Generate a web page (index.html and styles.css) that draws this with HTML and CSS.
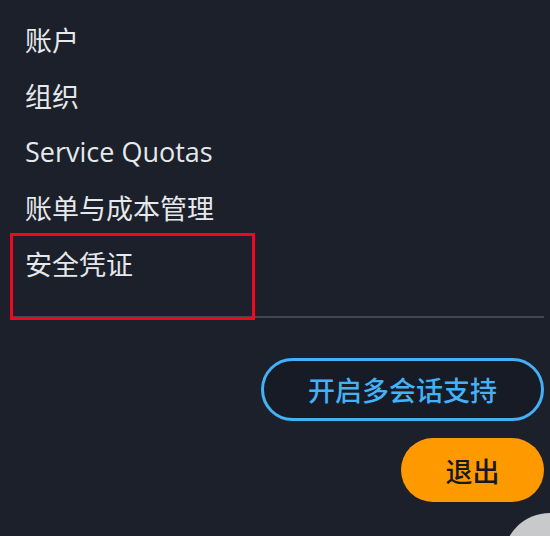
FILE: index.html
```html
<!DOCTYPE html>
<html lang="zh-CN">
<head>
<meta charset="utf-8">
<link rel="stylesheet" href="styles.css">
</head>
<body>
<div class="panel">
  <ul class="menu">
    <li class="item">账户</li>
    <li class="item">组织</li>
    <li class="item latin">Service Quotas</li>
    <li class="item">账单与成本管理</li>
    <li class="item">安全凭证</li>
  </ul>
  <div class="divider"></div>
  <div class="actions">
    <button class="btn btn-outline">开启多会话支持</button>
    <button class="btn btn-primary">退出</button>
  </div>
  <div class="highlight"></div>
  <div class="fab"></div>
</div>
</body>
</html>
```
FILE: styles.css
```css
html, body {
  margin: 0;
  padding: 0;
  background: #1b202b;
  overflow: hidden;
}
.panel {
  position: relative;
  width: 550px;
  height: 536px;
  overflow: hidden;
  box-sizing: border-box;
  padding: 12px 6px 0 0;
  font-family: "Open Sans", "Noto Sans CJK SC", sans-serif;
}
.menu {
  list-style: none;
  margin: 0;
  padding: 0 0 0 25px;
}
.item {
  height: 56px;
  line-height: 56px;
  font-size: 27px;
  font-weight: 400;
  color: #e6e8ea;
  font-family: "Noto Sans CJK SC", sans-serif;
}
.item.latin {
  font-family: "Open Sans", "Noto Sans CJK SC", sans-serif;
  font-size: 27px;
  font-weight: 500;
}
.divider {
  height: 2px;
  background: #434751;
  margin: 24px 0 0 12px;
}
.actions {
  display: flex;
  flex-direction: column;
  align-items: flex-end;
  gap: 17px;
  margin-top: 40px;
}
.btn {
  font-family: "Noto Sans CJK SC", sans-serif;
  font-size: 27px;
  font-weight: 500;
  border-radius: 40px;
  cursor: pointer;
  box-sizing: border-box;
  padding: 0;
}
.btn-outline {
  width: 283px;
  height: 63px;
  background: #161b25;
  border: 3px solid #44b0f5;
  color: #44b0f5;
}
.btn-primary {
  width: 143px;
  height: 64px;
  background: #ff9900;
  border: none;
  color: #16191f;
}
.highlight {
  position: absolute;
  left: 10px;
  top: 233px;
  width: 245px;
  height: 87px;
  box-sizing: border-box;
  border: 3px solid #f5061f;
}
.fab {
  position: absolute;
  left: 503px;
  top: 513px;
  width: 94px;
  height: 94px;
  border-radius: 50%;
  background: #c8c9cb;
}
```
